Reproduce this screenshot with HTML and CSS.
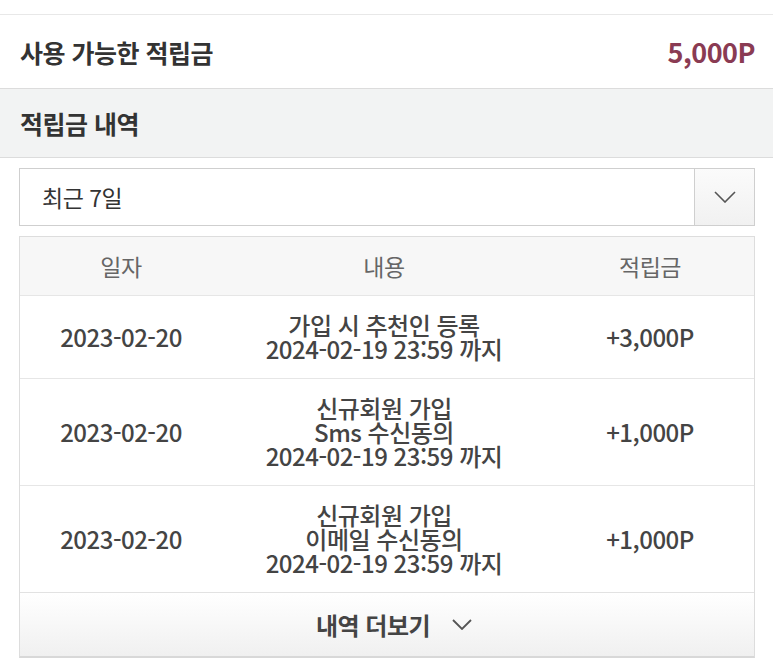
FILE: index.html
```html
<!DOCTYPE html>
<html lang="ko">
<head>
    <meta charset="UTF-8">
    <meta name="viewport" content="width=device-width, initial-scale=1.0">
    <title>적립금</title>
    <link rel="stylesheet" href="styles.css">
</head>
<body>
    <div class="top-gap"></div>

    <div class="point-summary">
        <span class="label">사용 가능한 적립금</span>
        <span class="amount">5,000P</span>
    </div>

    <div class="section-title">적립금 내역</div>

    <div class="container">
        <div class="period-select">
            <span class="period-value">최근 7일</span>
            <span class="period-arrow">
                <svg width="22" height="12" viewBox="0 0 22 12"><path d="M1 1 L11 11 L21 1" fill="none" stroke="#555" stroke-width="1.6"/></svg>
            </span>
        </div>

        <div class="history">
            <div class="history-row history-head">
                <div class="col-date">일자</div>
                <div class="col-desc">내용</div>
                <div class="col-point">적립금</div>
            </div>
            <div class="history-row">
                <div class="col-date">2023-02-20</div>
                <div class="col-desc">가입 시 추천인 등록<br>2024-02-19 23:59 까지</div>
                <div class="col-point">+3,000P</div>
            </div>
            <div class="history-row">
                <div class="col-date">2023-02-20</div>
                <div class="col-desc">신규회원 가입<br>Sms 수신동의<br>2024-02-19 23:59 까지</div>
                <div class="col-point">+1,000P</div>
            </div>
            <div class="history-row">
                <div class="col-date">2023-02-20</div>
                <div class="col-desc">신규회원 가입<br>이메일 수신동의<br>2024-02-19 23:59 까지</div>
                <div class="col-point">+1,000P</div>
            </div>
            <button class="more-btn">내역 더보기
                <svg width="20" height="11" viewBox="0 0 20 11"><path d="M1 1 L10 10 L19 1" fill="none" stroke="#555" stroke-width="1.8"/></svg>
            </button>
        </div>
    </div>
</body>
</html>
```

FILE: styles.css
```css
body {
    margin: 0;
    padding: 0;
    background-color: #ffffff;
    font-family: "Noto Sans CJK KR", "Noto Sans", sans-serif;
    color: #333;
}
.top-gap {
    height: 14px;
}
.point-summary {
    height: 73px;
    border-top: 1px solid #e8e8e8;
    padding: 0 18px 0 20px;
    display: flex;
    justify-content: space-between;
    align-items: center;
}
.point-summary .label {
    font-size: 25px;
    font-weight: bold;
    color: #333;
    letter-spacing: -0.5px;
}
.point-summary .amount {
    font-size: 27px;
    font-weight: bold;
    color: #8a3b53;
    letter-spacing: -0.5px;
}
.section-title {
    height: 68px;
    line-height: 68px;
    background-color: #f2f3f3;
    border-top: 1px solid #dcdcdc;
    border-bottom: 1px solid #dcdcdc;
    padding-left: 20px;
    font-size: 25px;
    font-weight: bold;
    color: #333;
    letter-spacing: -0.5px;
}
.container {
    padding: 10px 18px 0 19px;
}
.period-select {
    height: 56px;
    border: 1px solid #cfcfcf;
    display: flex;
    align-items: stretch;
}
.period-value {
    flex: 1;
    display: flex;
    align-items: center;
    padding-left: 22px;
    font-size: 23px;
    color: #333;
    letter-spacing: -0.5px;
}
.period-arrow {
    width: 59px;
    border-left: 1px solid #cfcfcf;
    background: linear-gradient(#fbfbfb, #f1f1f1);
    display: flex;
    align-items: center;
    justify-content: center;
}
.history {
    margin-top: 10px;
    border: 1px solid #dddddd;
    border-bottom: 2px solid #d8d8d8;
}
.history-row {
    display: flex;
    align-items: center;
    border-top: 1px solid #e6e6e6;
    padding: 17px 0;
    font-size: 24px;
    font-weight: 500;
    line-height: 24px;
    color: #444;
    text-align: center;
    letter-spacing: -0.5px;
}
.history-row:first-child {
    border-top: none;
}
.history-head {
    background-color: #f7f7f7;
    height: 36px;
    padding: 11px 0;
    color: #666;
    font-size: 23px;
    font-weight: normal;
}
.col-date {
    width: 202px;
}
.col-desc {
    flex: 1;
}
.col-point {
    width: 208px;
}
.more-btn {
    display: flex;
    width: 100%;
    height: 64px;
    align-items: center;
    justify-content: center;
    gap: 22px;
    border: none;
    border-top: 1px solid #e2e2e2;
    background: linear-gradient(#ffffff, #f0f0f0);
    font-family: inherit;
    font-size: 24px;
    font-weight: bold;
    color: #444;
    letter-spacing: -0.5px;
    padding: 0 0 0 14px;
}
```
